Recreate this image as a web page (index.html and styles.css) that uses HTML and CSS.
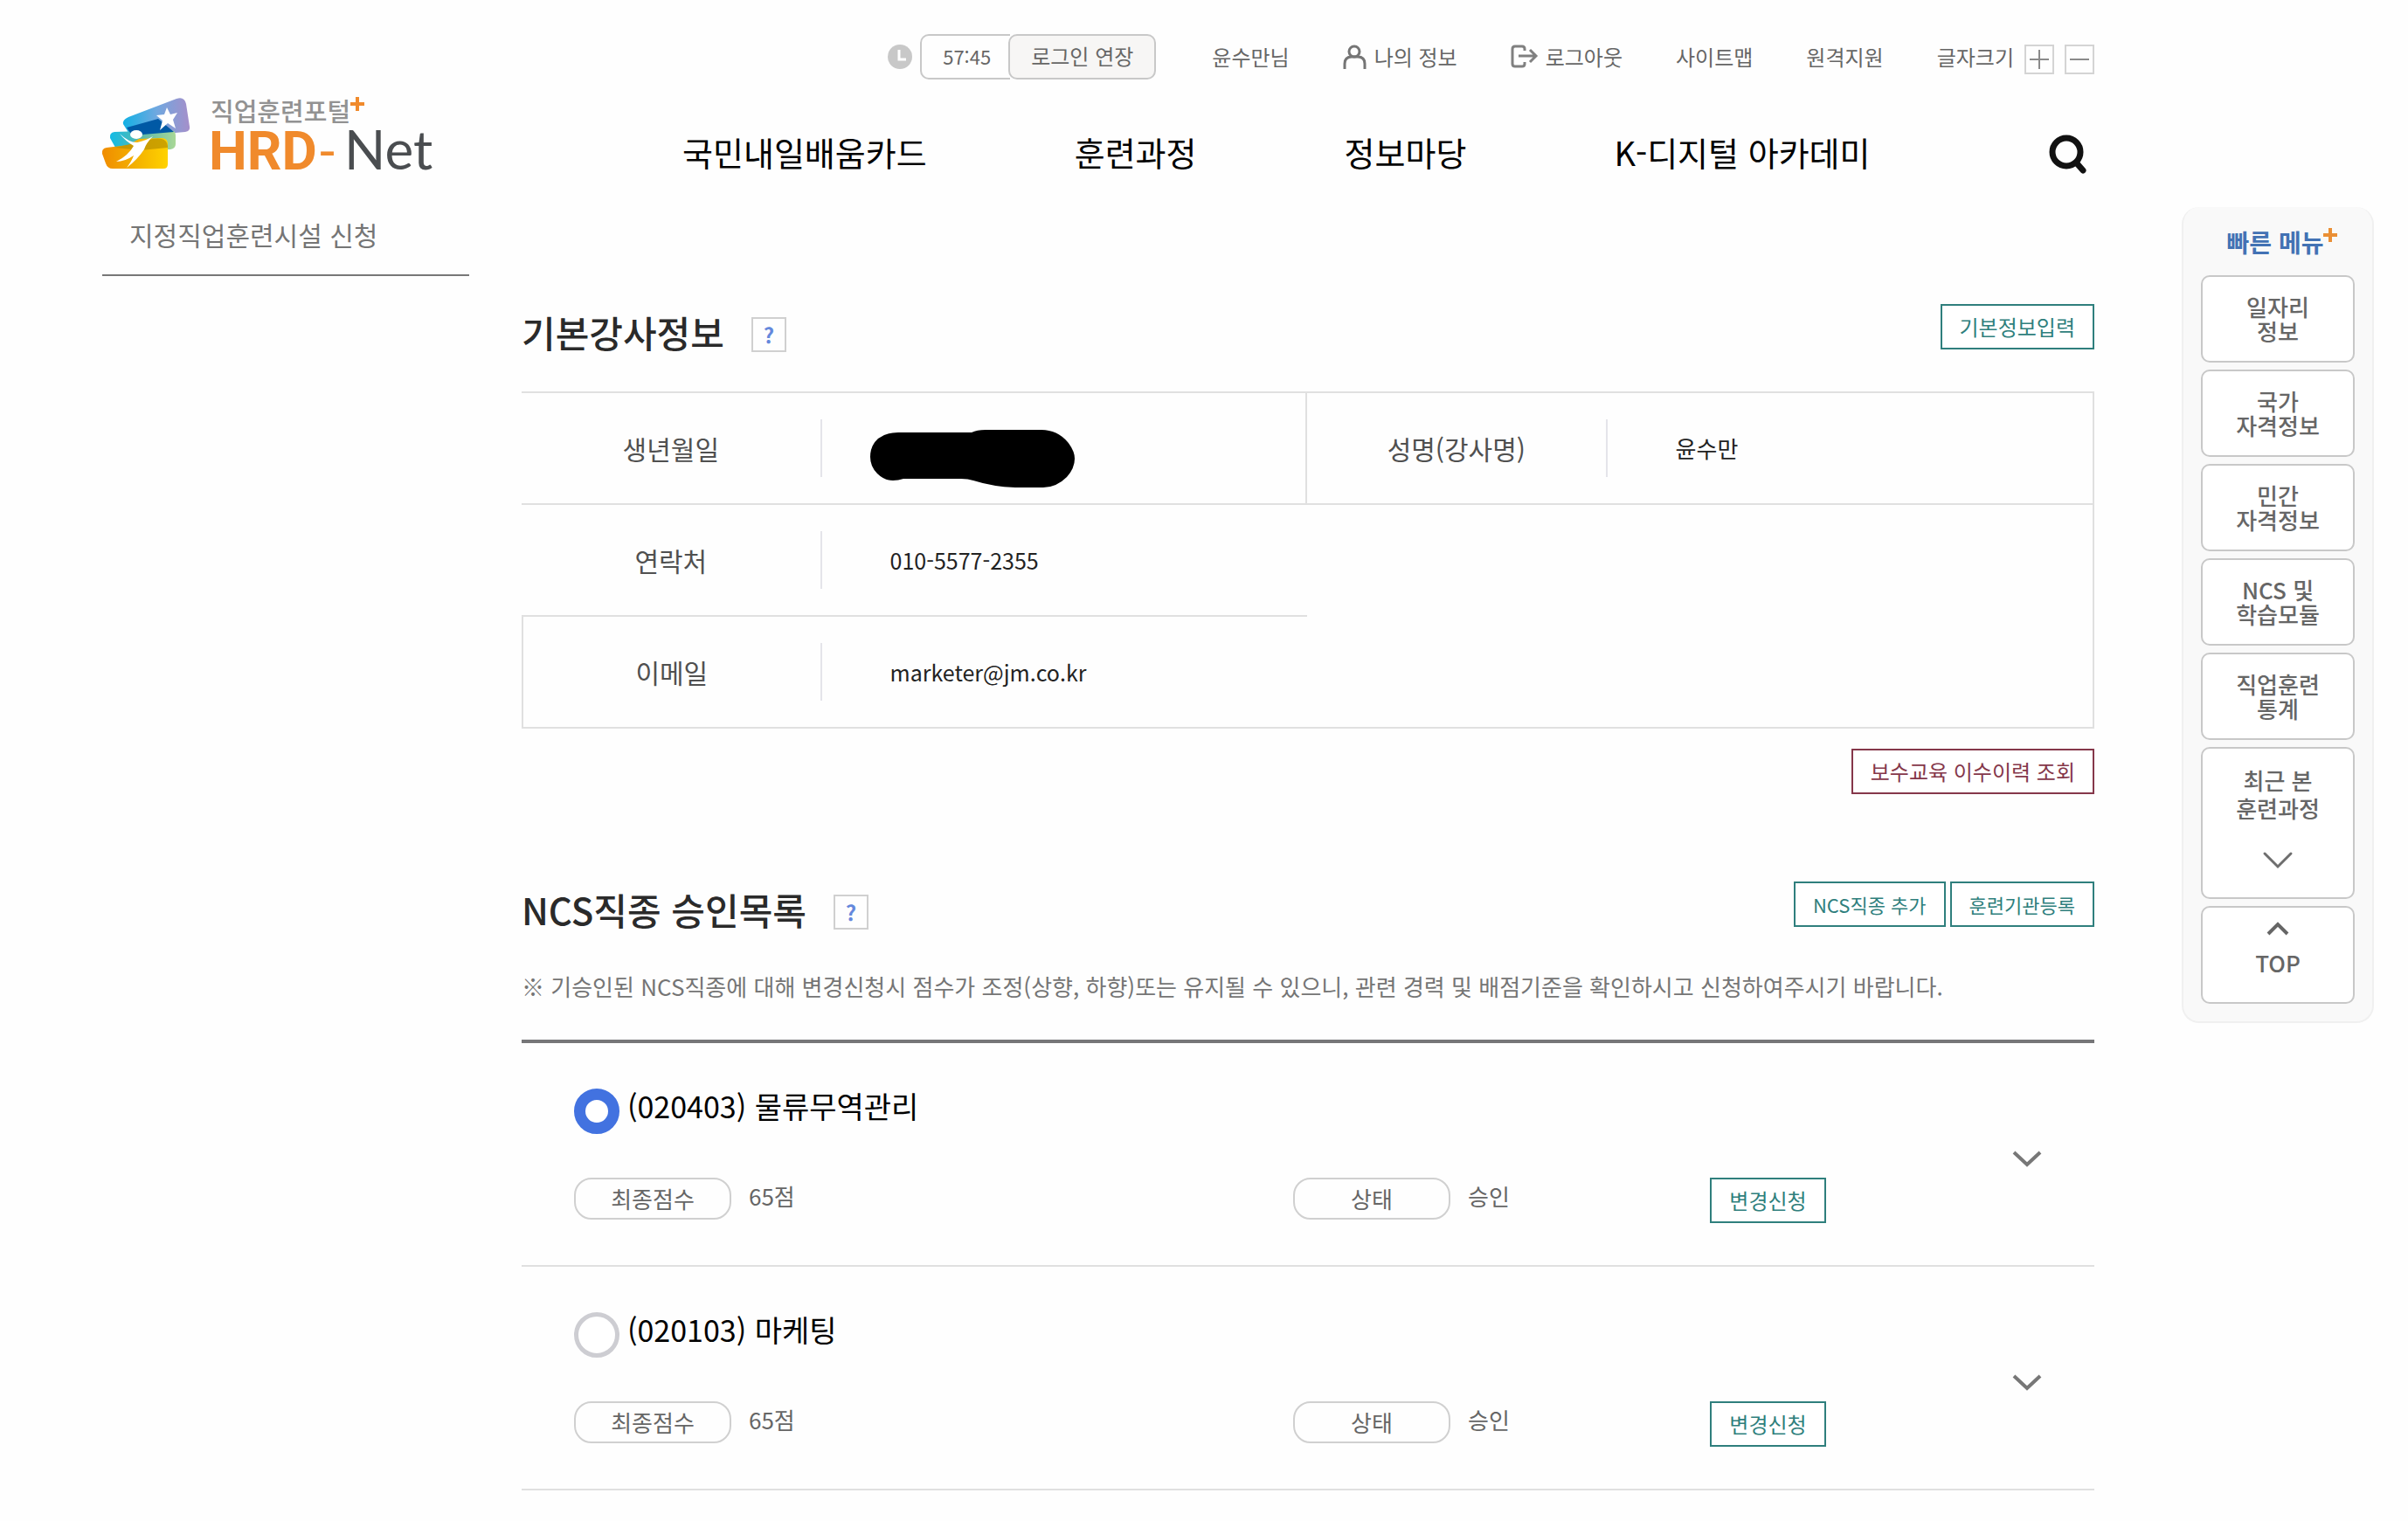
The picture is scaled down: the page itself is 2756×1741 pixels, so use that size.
FILE: index.html
```
<!DOCTYPE html>
<html lang="ko">
<head>
  <meta charset="UTF-8">
  <meta name="viewport" content="width=device-width, initial-scale=1.0">
  <title>직업훈련포털 HRD-Net</title>
  <link rel="stylesheet" href="styles.css">
</head>
<body>
  <div class="page">

    <div class="left">
      <a href="#" class="logo">
        <svg width="384" height="88" viewBox="0 0 384 88">
          <defs>
            <linearGradient id="gTop" x1="0" x2="1"><stop offset="0" stop-color="#12b0e4"/><stop offset=".5" stop-color="#6fa8e0"/><stop offset="1" stop-color="#a58fca"/></linearGradient>
            <linearGradient id="gMid" x1="0" x2="1"><stop offset="0" stop-color="#12bbe6"/><stop offset=".5" stop-color="#5fb9a8"/><stop offset="1" stop-color="#a9d896"/></linearGradient>
            <linearGradient id="gLow" x1="0" x2="1"><stop offset="0" stop-color="#f08c00"/><stop offset=".5" stop-color="#f3b000"/><stop offset="1" stop-color="#ffd200"/></linearGradient>
          </defs>
          <path d="M30 25 L85 4 Q94 1 96 10 L100 36 Q101 41 95 42 L38 47 Q31 48 29 41 L24 33 Q23 28 30 25Z" fill="url(#gTop)"/>
          <path d="M14 42 L78 40 Q84 40 84 46 L84 56 Q84 61 78 62 L22 64 Q16 64 14 58 L9 49 Q8 43 14 42Z" fill="url(#gMid)"/>
          <path d="M28 37 L64 27 L82 42 L34 46Z" fill="#0059a5"/>
          <path d="M5 60 L30 57 L42 50 L68 49 Q75 49 75 56 L75 79 Q75 84 70 84 L12 84 Q6 84 4 78 L0 67 Q-1 61 5 60Z" fill="url(#gLow)"/>
          <path d="M14 60 L58 50 Q75 47 75 60 L44 63Z" fill="#b79000" opacity=".7"/>
          <path d="M74 14 L78 22 L86 20 L81 28 L84 38 L75 32 L66 40 L69 29 L62 23 L71 22Z" fill="#fff"/>
          <ellipse cx="39" cy="45" rx="7" ry="5" fill="#fff"/>
          <path d="M20 44 Q30 54 40 54 Q50 52 58 47 Q50 55 48 62 Q40 74 28 83 Q34 75 36 69 Q26 76 16 76 Q30 69 36 58 Q26 52 20 44Z" fill="#fff"/>
          <text x="124" y="30" class="logo-kr">직업훈련포털</text>
          <path d="M292 2v16M284 10h16" stroke="#f08a2c" stroke-width="4"/>
          <text y="85" class="logo-en"><tspan x="122" class="logo-hrd">HRD</tspan><tspan x="249" class="logo-dash">-</tspan><tspan x="277" class="logo-net">Net</tspan></text>
        </svg>
      </a>
      <a href="#" class="side-link">지정직업훈련시설 신청</a>
    </div>

    <div class="center">
      <header>
        <div class="util">
          <div class="session">
            <svg width="28" height="28" viewBox="0 0 28 28"><circle cx="14" cy="14" r="14" fill="#c8c8c8"/><path d="M13 6v11h8" fill="none" stroke="#fff" stroke-width="3"/></svg>
            <span class="timer">57:45</span>
            <button class="extend">로그인 연장</button>
          </div>
          <a href="#">윤수만님</a>
          <a href="#">
            <svg width="27" height="28" viewBox="0 0 27 28" fill="none" stroke="#757575" stroke-width="3"><circle cx="13" cy="8" r="6"/><path d="M2 28v-6q0-8 8-8h7q8 0 8 8v6"/></svg>
            나의 정보
          </a>
          <a href="#">
            <svg width="31" height="28" viewBox="0 0 31 28" fill="none" stroke="#808080" stroke-width="3"><path d="M16 7V5q0-3-3-3H5Q2 2 2 5v17q0 3 3 3h8q3 0 3-3v-2"/><path d="M9 13h19M22 6l7 7-7 7"/></svg>
            로그아웃
          </a>
          <a href="#">사이트맵</a>
          <a href="#">원격지원</a>
          <div class="font-size">
            <span>글자크기</span>
            <button class="size-btn" aria-label="글자 크게"><svg width="30" height="30" viewBox="0 0 30 30"><path d="M15 4v22M4 15h22" stroke="#8a8a8a" stroke-width="2"/></svg></button>
            <button class="size-btn" aria-label="글자 작게"><svg width="30" height="30" viewBox="0 0 30 30"><path d="M4 15h22" stroke="#8a8a8a" stroke-width="2"/></svg></button>
          </div>
        </div>
        <nav class="menu">
          <a href="#">국민내일배움카드</a>
          <a href="#">훈련과정</a>
          <a href="#">정보마당</a>
          <a href="#">K-디지털 아카데미</a>
          <button class="search" aria-label="검색">
            <svg width="44" height="46" viewBox="0 0 44 46" fill="none" stroke="#111" stroke-linecap="round"><circle cx="20" cy="20" r="16" stroke-width="7"/><path d="M32 33l7 8" stroke-width="7"/></svg>
          </button>
        </nav>
      </header>

      <main>
        <section>
          <div class="title-bar">
            <h2>기본강사정보</h2>
            <button class="help">?</button>
            <div class="actions">
              <button class="btn">기본정보입력</button>
            </div>
          </div>
          <table class="info">
            <tr>
              <th>생년월일</th>
              <td class="split">
                <div class="value">
                  <svg class="mask" width="234" height="66" viewBox="0 0 234 66"><path d="M32 3 H116 Q122 0 132 0 H196 Q214 0 226 14 Q234 24 234 33 Q234 44 225 54 Q213 66 198 66 H166 Q140 65 118 58 Q112 56 104 56 H38 Q32 58 26 58 Q16 58 8 50 Q0 42 0 31 Q0 18 9 10 Q18 3 32 3Z"/></svg>
                </div>
              </td>
              <th>성명(강사명)</th>
              <td><div class="value">윤수만</div></td>
            </tr>
            <tr>
              <th>연락처</th>
              <td><div class="value value-en">010-5577-2355</div></td>
              <td colspan="2" rowspan="2"></td>
            </tr>
            <tr>
              <th class="first">이메일</th>
              <td><div class="value value-en">marketer@jm.co.kr</div></td>
            </tr>
          </table>
          <div class="below">
            <button class="btn btn-red">보수교육 이수이력 조회</button>
          </div>
        </section>

        <section>
          <div class="title-bar">
            <h2>NCS직종 승인목록</h2>
            <button class="help">?</button>
            <div class="actions">
              <button class="btn btn-small">NCS직종 추가</button>
              <button class="btn btn-small">훈련기관등록</button>
            </div>
          </div>
          <p class="notice">※ 기승인된 NCS직종에 대해 변경신청시 점수가 조정(상향, 하향)또는 유지될 수 있으니, 관련 경력 및 배점기준을 확인하시고 신청하여주시기 바랍니다.</p>
          <ul class="jobs">
            <li>
              <div class="job">
                <label class="job-name"><input type="radio" name="job" checked> (020403) 물류무역관리</label>
                <div class="job-info">
                  <div class="pair"><span class="pill">최종점수</span><span class="pair-value">65점</span></div>
                  <div class="pair"><span class="pill">상태</span><span class="pair-value">승인</span></div>
                  <div><button class="btn">변경신청</button></div>
                </div>
              </div>
              <button class="toggle" aria-label="펼치기"><svg width="34" height="18" viewBox="0 0 34 18"><path d="M2 1l15 14L32 1" fill="none" stroke="#777" stroke-width="4"/></svg></button>
            </li>
            <li>
              <div class="job">
                <label class="job-name"><input type="radio" name="job"> (020103) 마케팅</label>
                <div class="job-info">
                  <div class="pair"><span class="pill">최종점수</span><span class="pair-value">65점</span></div>
                  <div class="pair"><span class="pill">상태</span><span class="pair-value">승인</span></div>
                  <div><button class="btn">변경신청</button></div>
                </div>
              </div>
              <button class="toggle" aria-label="펼치기"><svg width="34" height="18" viewBox="0 0 34 18"><path d="M2 1l15 14L32 1" fill="none" stroke="#777" stroke-width="4"/></svg></button>
            </li>
          </ul>
        </section>
      </main>
    </div>

    <aside class="quick">
      <h3>빠른 메뉴<svg width="16" height="16" viewBox="0 0 16 16"><path d="M8 0v16M0 8h16" stroke="#ea8f35" stroke-width="4"/></svg></h3>
      <a href="#">일자리<br>정보</a>
      <a href="#">국가<br>자격정보</a>
      <a href="#">민간<br>자격정보</a>
      <a href="#">NCS 및<br>학습모듈</a>
      <a href="#">직업훈련<br>통계</a>
      <a href="#" class="recent">
        최근 본<br>훈련과정
        <svg width="34" height="20" viewBox="0 0 34 20"><path d="M2 2l15 15L32 2" fill="none" stroke="#6e6e6e" stroke-width="3" stroke-linecap="round"/></svg>
      </a>
      <a href="#" class="top">
        <svg width="26" height="16" viewBox="0 0 26 16"><path d="M2 14L13 3l11 11" fill="none" stroke="#666" stroke-width="4"/></svg>
        TOP
      </a>
    </aside>

  </div>
</body>
</html>
```

FILE: styles.css
```
* {
  box-sizing: border-box;
  margin: 0;
  padding: 0;
}

body {
  background-color: #fefefe;
  color: #666;
  font-family: "Noto Sans CJK KR", "Noto Sans", sans-serif;
  font-size: 24px;
}

a {
  color: inherit;
  text-decoration: none;
}

button {
  background: none;
  border: none;
  color: inherit;
  font: inherit;
  cursor: pointer;
}

svg {
  display: block;
  flex-shrink: 0;
  overflow: visible;
}

ul {
  list-style: none;
}

.page {
  display: flex;
  align-items: flex-start;
  padding: 0 39px 0 117px;
}

/* logo + left menu */
.left {
  width: 420px;
  margin-right: 60px;
  padding-top: 109px;
  flex-shrink: 0;
}
.logo {
  display: block;
}
.logo-kr {
  font-size: 29px;
  font-weight: 500;
  fill: #929292;
}
.logo-en {
  font-family: Roboto, sans-serif;
  font-size: 62px;
}
.logo-hrd {
  font-weight: bold;
  fill: #f08a2c;
}
.logo-dash {
  font-weight: 400;
  fill: #f08a2c;
}
.logo-net {
  font-family: Lato, sans-serif;
  font-weight: 400;
  fill: #4a4d50;
}
.side-link {
  display: block;
  margin-top: 44px;
  padding: 0 31px 19px;
  border-bottom: 2px solid #777;
  font-size: 30px;
  line-height: 54px;
  color: #757575;
}

/* header */
.center {
  flex: 1;
  min-width: 0;
}
.util {
  display: flex;
  justify-content: flex-end;
  align-items: center;
  gap: 61px;
  padding-top: 39px;
}
.util a, .session, .font-size {
  display: flex;
  align-items: center;
  gap: 9px;
  line-height: 52px;
  white-space: nowrap;
}
.timer {
  height: 52px;
  padding: 0 22px 0 24px;
  border: 2px solid #c8c8c8;
  border-right: none;
  border-radius: 10px 0 0 10px;
  font-size: 22px;
  line-height: 46px;
}
.extend {
  height: 52px;
  margin: 0 3px 0 -11px;
  padding: 0 24px 2px;
  border: 2px solid #c8c8c8;
  border-radius: 10px;
  background-color: #f7f6f5;
  line-height: 46px;
}
.font-size {
  gap: 12px;
}
.size-btn {
  width: 34px;
  height: 34px;
  margin-top: 6px;
  border: 2px solid #d4d4d4;
}
.menu {
  display: flex;
  align-items: center;
  gap: 169px;
  padding: 55px 8px 0 184px;
  color: #000;
  font-size: 38px;
  line-height: 56px;
  white-space: nowrap;
}
.search {
  margin: 6px 0 0 auto;
}

/* sections */
main {
  padding-top: 146px;
}
section {
  margin-bottom: 100px;
}
.title-bar {
  display: flex;
  height: 64px;
  margin-bottom: 36px;
}
h2 {
  color: #2a2a2a;
  font-size: 42px;
  font-weight: 500;
  line-height: 64px;
}
.help {
  width: 40px;
  height: 40px;
  margin: 15px 0 0 31px;
  border: 2px solid #d0d0d0;
  color: #6488dc;
  font-weight: bold;
  line-height: 36px;
}
.actions {
  display: flex;
  gap: 5px;
  margin-left: auto;
}
.btn {
  height: 52px;
  padding: 0 20px;
  border: 2px solid #2f7f7d;
  background-color: #fff;
  color: #2f7f7d;
  line-height: 48px;
  white-space: nowrap;
}
.btn-small {
  font-size: 22px;
}
.btn-red {
  border-color: #85374a;
  color: #85374a;
}

.info {
  width: 100%;
  table-layout: fixed;
  border-spacing: 0;
  border-top: 2px solid #e0e0e0;
  border-right: 2px solid #e0e0e0;
}
.info th, .info td {
  height: 128px;
  border-bottom: 2px solid #e0e0e0;
}
.info th {
  width: 19%;
  color: #505050;
  font-size: 30px;
  font-weight: normal;
}
.info .split {
  border-right: 2px solid #e0e0e0;
}
.info .first {
  border-left: 2px solid #e0e0e0;
}
.value {
  position: relative;
  height: 66px;
  padding-left: 78px;
  border-left: 2px solid #e4e4ea;
  color: #222;
  font-size: 26px;
  line-height: 66px;
}
.value-en {
  font-size: 25px;
}
.mask {
  position: absolute;
  left: 55px;
  top: 12px;
}
.below {
  display: flex;
  justify-content: flex-end;
  margin-top: 23px;
}

.notice {
  margin-bottom: 41px;
  color: #757575;
  font-size: 26px;
  line-height: 40px;
}

.jobs {
  border-top: 4px solid #767678;
}
.jobs li {
  display: flex;
  align-items: center;
  padding: 52px 60px 48px;
  border-bottom: 2px solid #e0e0e0;
}
.job {
  flex: 1;
}
.job-name {
  display: flex;
  gap: 9px;
  height: 52px;
  margin-bottom: 50px;
  color: #000;
  font-size: 34px;
  line-height: 40px;
}
.job-name input {
  appearance: none;
  width: 52px;
  height: 52px;
  border: 5px solid #cdcdd2;
  border-radius: 50%;
  background-color: #fff;
}
.job-name input:checked {
  border: 13px solid #4272e0;
}
.job-info {
  display: grid;
  grid-template-columns: 50% 29% 1fr;
}
.pair {
  display: flex;
  gap: 20px;
  font-size: 26px;
}
.pill {
  width: 180px;
  height: 48px;
  border: 2px solid #d0d0d0;
  border-radius: 20px;
  line-height: 44px;
  text-align: center;
}
.pair-value {
  line-height: 42px;
}
.toggle {
  margin-top: 8px;
}

/* quick menu */
.quick {
  display: flex;
  flex-direction: column;
  gap: 8px;
  width: 220px;
  margin: 237px 0 0 100px;
  padding: 16px 20px 20px;
  border: 2px solid #f0f0f0;
  border-top: none;
  border-radius: 20px;
  background-color: #f9f9f9;
  flex-shrink: 0;
}
.quick h3 {
  display: flex;
  justify-content: center;
  height: 54px;
  padding-left: 10px;
  color: #4272b4;
  font-size: 28px;
  line-height: 48px;
}
.quick h3 svg {
  margin-top: 8px;
}
.quick a {
  height: 100px;
  padding-top: 20px;
  border: 2px solid #c8c8c8;
  border-radius: 10px;
  background-color: #fff;
  font-size: 26px;
  font-weight: 500;
  line-height: 28px;
  text-align: center;
}
.quick a svg {
  margin: 0 auto;
}
.quick .recent {
  height: 174px;
  line-height: 32px;
}
.quick .recent svg {
  margin-top: 34px;
}
.quick .top {
  height: 112px;
  padding-top: 16px;
  line-height: 62px;
}
```
